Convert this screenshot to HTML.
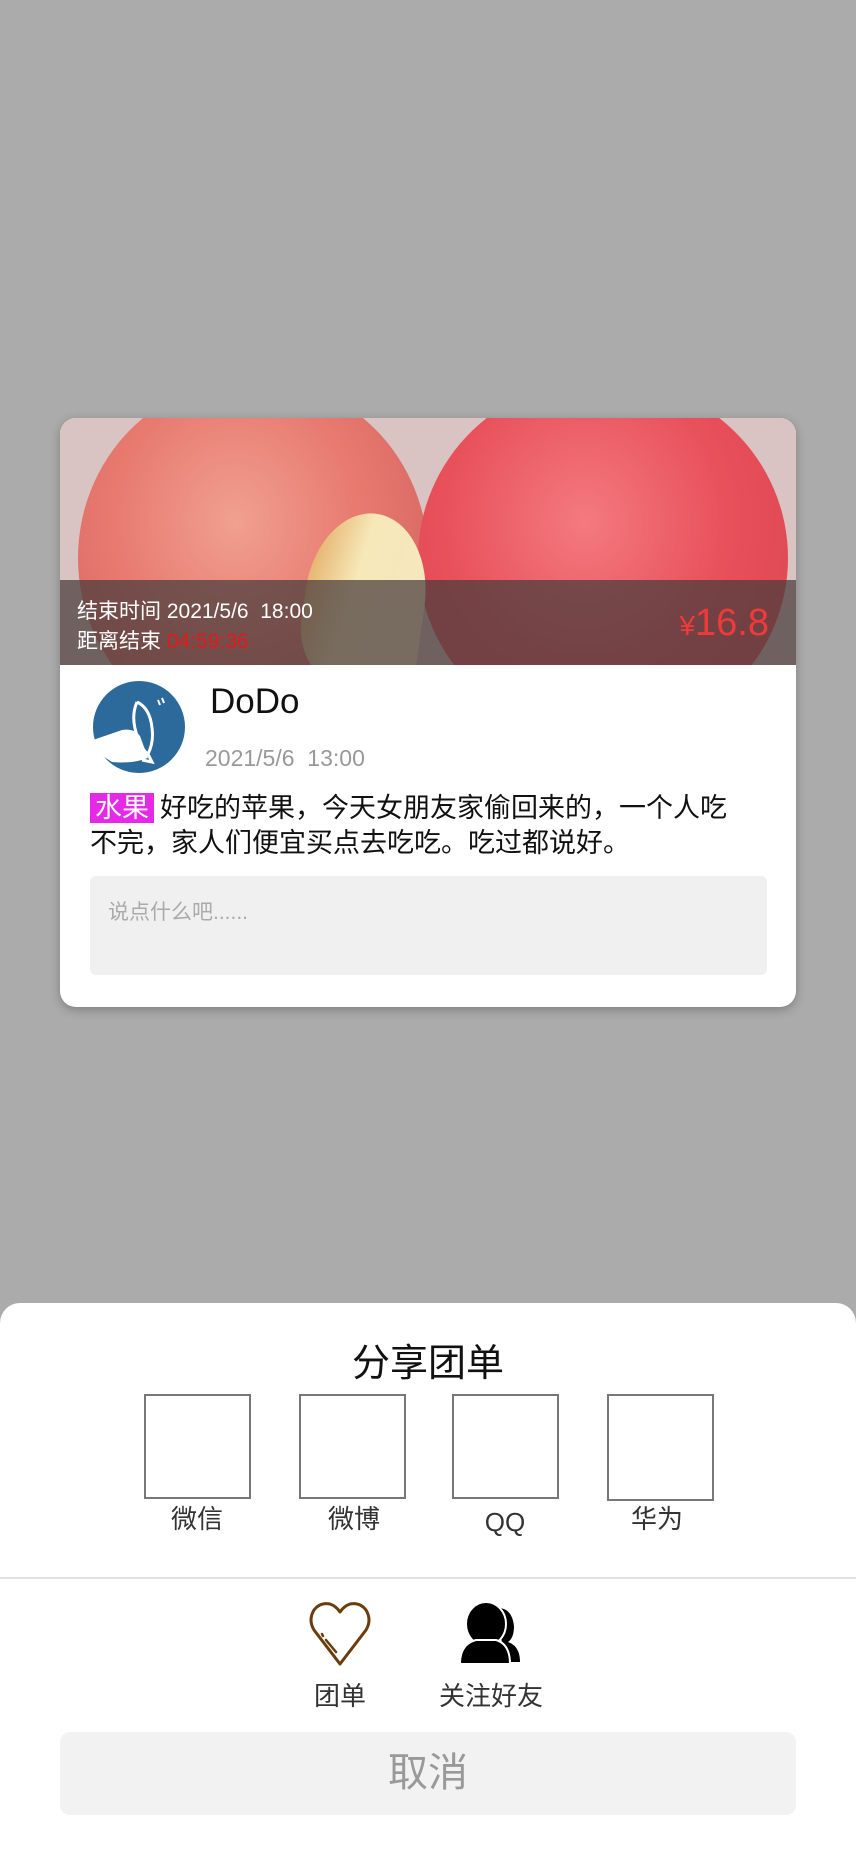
<!DOCTYPE html>
<html><head><meta charset="utf-8">
<style>
*{margin:0;padding:0;box-sizing:border-box}
body{width:856px;height:1852px;background:#ababab;position:relative;overflow:hidden;font-family:"Liberation Sans","Noto Sans CJK SC",sans-serif}
.card{position:absolute;left:60px;top:418px;width:736px;height:589px;background:#fff;border-radius:16px;overflow:hidden;box-shadow:0 3px 10px rgba(0,0,0,.25)}
.img{position:absolute;left:0;top:0;width:736px;height:247px;background:#d9c3c3;overflow:hidden}
.ab{position:absolute;border-radius:50%}
.band{position:absolute;left:0;top:162px;width:736px;height:85px;background:rgba(70,60,60,.72)}
.t{position:absolute;color:#fff;font-size:21px;white-space:nowrap}
.abs{position:absolute;white-space:nowrap}
.box{position:absolute;top:1394px;width:107px;height:105px;border:2px solid #777}
.lab{position:absolute;top:1502px;font-size:26px;line-height:34px;height:34px;color:#333;width:120px;text-align:center}
</style></head><body>
<div class="card">
 <div class="img">
  <div class="ab" style="left:18px;top:-40px;width:350px;height:360px;background:radial-gradient(ellipse at 45% 40%,#f0a090 0%,#e87a70 45%,#d86a64 75%,#c86060 100%)"></div>
  <div class="ab" style="left:358px;top:-40px;width:370px;height:360px;background:radial-gradient(ellipse at 45% 40%,#f47a80 0%,#e8505a 50%,#d84450 100%)"></div>
  <div style="position:absolute;left:245px;top:95px;width:120px;height:170px;background:linear-gradient(100deg,#e2a860 0%,#f6e8b8 40%,#f6e6c0 100%);border-radius:60% 60% 20% 40%;transform:rotate(8deg)"></div>
  <div class="band"></div>
  <div class="t" style="left:17px;top:177px">结束时间 2021/5/6&nbsp;&nbsp;18:00</div>
  <div class="t" style="left:17px;top:207px">距离结束 <span style="color:#e21a1a">04:59:36</span></div>
  <div class="abs" style="right:27px;top:184px;color:#f03a3a;font-size:38px"><span style="font-size:28px">¥</span>16.8</div>
 </div>
 <svg style="position:absolute;left:32px;top:262px" width="94" height="94" viewBox="0 0 94 94">
  <circle cx="47" cy="47" r="46" fill="#2c6a9c"/>
  <path d="M1 60 L30 50 Q42 48 48 56 L56 78 Q40 84 20 82 L1 70Z" fill="#fff"/>
  <path d="M45 22 Q58 28 60 48 Q62 62 56 74 L60 82 L50 80 M45 22 Q38 38 46 58 Q50 70 56 74" stroke="#fff" stroke-width="3" fill="none"/>
  <path d="M66 20 l2 5 M70 18 l2 5" stroke="#fff" stroke-width="2"/>
 </svg>
 <div class="abs" style="left:150px;top:264px;font-size:35px;color:#111">DoDo</div>
 <div class="abs" style="left:145px;top:327px;font-size:23px;color:#999">2021/5/6&nbsp;&nbsp;13:00</div>
 <div style="position:absolute;left:30px;top:373px;width:700px;font-size:27px;line-height:35px;color:#111;white-space:nowrap"><span style="background:#e629e6;color:#fff;padding:0 5px;margin-right:6px">水果</span>好吃的苹果，今天女朋友家偷回来的，一个人吃<br>不完，家人们便宜买点去吃吃。吃过都说好。</div>
 <div style="position:absolute;left:30px;top:458px;width:677px;height:99px;background:#f0f0f0;border-radius:6px"></div>
 <div class="abs" style="left:48px;top:478px;font-size:21px;color:#aaa">说点什么吧......</div>
</div>

<div style="position:absolute;left:0;top:1303px;width:856px;height:560px;background:#fff;border-radius:20px 20px 0 0"></div>
<div class="abs" style="left:0;width:856px;text-align:center;top:1332px;font-size:38px;color:#111">分享团单</div>
<div class="box" style="left:144px"></div>
<div class="box" style="left:299px"></div>
<div class="box" style="left:452px"></div>
<div class="box" style="left:607px;height:107px"></div>
<div class="lab" style="left:137px">微信</div>
<div class="lab" style="left:294px">微博</div>
<div class="lab" style="left:445px;top:1505px">QQ</div>
<div class="lab" style="left:597px">华为</div>
<div style="position:absolute;left:0;top:1577px;width:856px;height:2px;background:#e2e2e2"></div>
<svg style="position:absolute;left:308px;top:1600px" width="64" height="66" viewBox="0 0 64 66">
 <path d="M32 64 L6 30 Q0 20 6 10 Q12 2 22 4 Q28 6 32 12 Q36 6 42 4 Q52 2 58 10 Q64 20 58 30 Z" fill="none" stroke="#6b3c0c" stroke-width="3" stroke-linejoin="round"/>
 <path d="M18 40 L28 52 M14 34 l1 2" stroke="#6b3c0c" stroke-width="2.5" stroke-linecap="round"/>
</svg>
<svg style="position:absolute;left:458px;top:1600px" width="66" height="66" viewBox="0 0 66 66">
 <path d="M40 8 Q54 8 56 26 Q56 38 50 42 Q62 46 62 62 L46 62 Z" fill="#000"/>
 <ellipse cx="28" cy="24" rx="20" ry="22" fill="#000" stroke="#fff" stroke-width="2"/>
 <ellipse cx="28" cy="24" rx="17" ry="20" fill="#000"/>
 <path d="M2 64 Q2 44 18 40 L38 40 Q52 44 52 64 Z" fill="#000" stroke="#fff" stroke-width="2"/>
</svg>
<div class="abs" style="left:280px;width:120px;text-align:center;top:1676px;font-size:26px;color:#333">团单</div>
<div class="abs" style="left:411px;width:160px;text-align:center;top:1676px;font-size:26px;color:#333">关注好友</div>
<div style="position:absolute;left:60px;top:1732px;width:736px;height:83px;background:#f2f2f2;border-radius:10px;text-align:center;line-height:83px;font-size:40px;color:#999">取消</div>
</body></html>
